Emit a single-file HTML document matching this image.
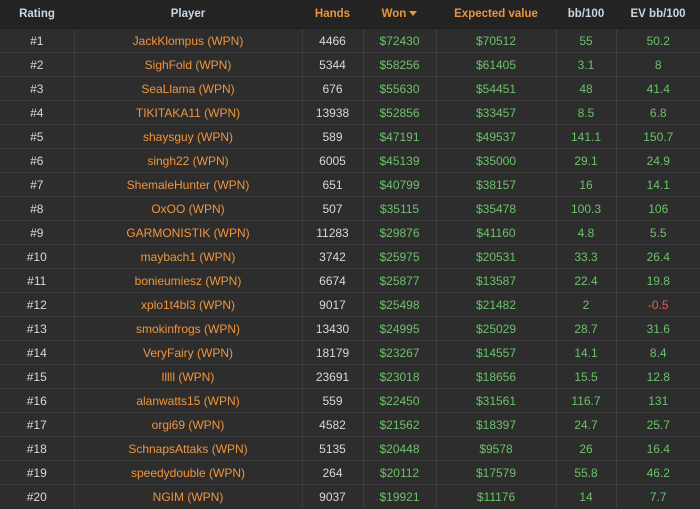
<!DOCTYPE html><html><head><style>
body{margin:0;background:#2d2d2d;font-family:"Liberation Sans",sans-serif;font-size:12px;}
table{border-collapse:collapse;table-layout:fixed;width:700px;}
th{background:#232323;height:28px;font-weight:bold;font-size:11.5px;color:#c9d6e3;padding:0;text-align:center;border-bottom:1px solid #1c1c1c}
th.o{color:#e8953e}
td{height:23px;padding:0;text-align:center;border-top:1px solid #3c3c3c;border-left:1px solid #3c3c3c;color:#d8d8d8}
td:first-child{border-left:none}
td.p{color:#f0953c}
td.g{color:#6cc26a}
td.r{color:#e85a50}
.tri{display:inline-block;width:0;height:0;border-left:4px solid transparent;border-right:4px solid transparent;border-top:5px solid #e8953e;vertical-align:middle;margin-left:3px}
</style></head><body><table>
<colgroup><col style="width:74px"><col style="width:228px"><col style="width:61px"><col style="width:73px"><col style="width:120px"><col style="width:60px"><col style="width:84px"></colgroup>
<tr><th>Rating</th><th>Player</th><th class="o">Hands</th><th class="o">Won<span class="tri"></span></th><th class="o">Expected value</th><th>bb/100</th><th>EV bb/100</th></tr>
<tr><td>#1</td><td class="p">JackKlompus (WPN)</td><td>4466</td><td class="g">$72430</td><td class="g">$70512</td><td class="g">55</td><td class="g">50.2</td></tr>
<tr><td>#2</td><td class="p">SighFold (WPN)</td><td>5344</td><td class="g">$58256</td><td class="g">$61405</td><td class="g">3.1</td><td class="g">8</td></tr>
<tr><td>#3</td><td class="p">SeaLlama (WPN)</td><td>676</td><td class="g">$55630</td><td class="g">$54451</td><td class="g">48</td><td class="g">41.4</td></tr>
<tr><td>#4</td><td class="p">TIKITAKA11 (WPN)</td><td>13938</td><td class="g">$52856</td><td class="g">$33457</td><td class="g">8.5</td><td class="g">6.8</td></tr>
<tr><td>#5</td><td class="p">shaysguy (WPN)</td><td>589</td><td class="g">$47191</td><td class="g">$49537</td><td class="g">141.1</td><td class="g">150.7</td></tr>
<tr><td>#6</td><td class="p">singh22 (WPN)</td><td>6005</td><td class="g">$45139</td><td class="g">$35000</td><td class="g">29.1</td><td class="g">24.9</td></tr>
<tr><td>#7</td><td class="p">ShemaleHunter (WPN)</td><td>651</td><td class="g">$40799</td><td class="g">$38157</td><td class="g">16</td><td class="g">14.1</td></tr>
<tr><td>#8</td><td class="p">OxOO (WPN)</td><td>507</td><td class="g">$35115</td><td class="g">$35478</td><td class="g">100.3</td><td class="g">106</td></tr>
<tr><td>#9</td><td class="p">GARMONISTIK (WPN)</td><td>11283</td><td class="g">$29876</td><td class="g">$41160</td><td class="g">4.8</td><td class="g">5.5</td></tr>
<tr><td>#10</td><td class="p">maybach1 (WPN)</td><td>3742</td><td class="g">$25975</td><td class="g">$20531</td><td class="g">33.3</td><td class="g">26.4</td></tr>
<tr><td>#11</td><td class="p">bonieumiesz (WPN)</td><td>6674</td><td class="g">$25877</td><td class="g">$13587</td><td class="g">22.4</td><td class="g">19.8</td></tr>
<tr><td>#12</td><td class="p">xplo1t4bl3 (WPN)</td><td>9017</td><td class="g">$25498</td><td class="g">$21482</td><td class="g">2</td><td class="r">-0.5</td></tr>
<tr><td>#13</td><td class="p">smokinfrogs (WPN)</td><td>13430</td><td class="g">$24995</td><td class="g">$25029</td><td class="g">28.7</td><td class="g">31.6</td></tr>
<tr><td>#14</td><td class="p">VeryFairy (WPN)</td><td>18179</td><td class="g">$23267</td><td class="g">$14557</td><td class="g">14.1</td><td class="g">8.4</td></tr>
<tr><td>#15</td><td class="p">lllll (WPN)</td><td>23691</td><td class="g">$23018</td><td class="g">$18656</td><td class="g">15.5</td><td class="g">12.8</td></tr>
<tr><td>#16</td><td class="p">alanwatts15 (WPN)</td><td>559</td><td class="g">$22450</td><td class="g">$31561</td><td class="g">116.7</td><td class="g">131</td></tr>
<tr><td>#17</td><td class="p">orgi69 (WPN)</td><td>4582</td><td class="g">$21562</td><td class="g">$18397</td><td class="g">24.7</td><td class="g">25.7</td></tr>
<tr><td>#18</td><td class="p">SchnapsAttaks (WPN)</td><td>5135</td><td class="g">$20448</td><td class="g">$9578</td><td class="g">26</td><td class="g">16.4</td></tr>
<tr><td>#19</td><td class="p">speedydouble (WPN)</td><td>264</td><td class="g">$20112</td><td class="g">$17579</td><td class="g">55.8</td><td class="g">46.2</td></tr>
<tr><td>#20</td><td class="p">NGIM (WPN)</td><td>9037</td><td class="g">$19921</td><td class="g">$11176</td><td class="g">14</td><td class="g">7.7</td></tr>
</table></body></html>
